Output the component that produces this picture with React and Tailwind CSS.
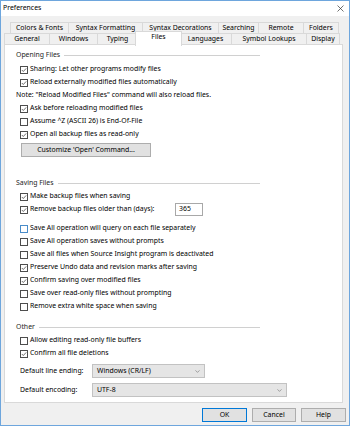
import { ChevronDown } from "lucide-react";

const rowTabs = [
  ["Colors & Fonts", "w-[59px]"],
  ["Syntax Formatting", "w-[75px] -ml-px"],
  ["Syntax Decorations", "w-[77px] -ml-px"],
  ["Searching", "w-[41px] -ml-px"],
  ["Remote", "w-[46px] -ml-px"],
  ["Folders", "w-[36px] -ml-px"],
];

const bottomTabs = [
  ["General", "w-[46px]"],
  ["Windows", "w-[49px] -ml-px"],
  ["Typing", "w-[41px] -ml-px"],
  ["Files", "w-[47px] -ml-[3px]", true],
  ["Languages", "w-[53px] -ml-[3px]"],
  ["Symbol Lookups", "w-[76px] -ml-px"],
  ["Display", "w-[34px] -ml-px"],
];

function Tab({ label, cls, active }) {
  if (active) {
    return (
      <div
        className={`${cls} relative z-10 -mt-[2px] h-[15px] flex items-start pt-[2px] justify-center bg-white border border-b-0 border-[#d9d9d9]`}
      >
        {label}
      </div>
    );
  }
  return (
    <div
      className={`${cls} h-[12px] flex items-center justify-center bg-[#f0f0f0] border border-[#d9d9d9]`}
    >
      {label}
    </div>
  );
}

function Box({ checked, focus }) {
  return (
    <span
      className={`w-[8px] h-[8px] shrink-0 flex items-center justify-center bg-white border ${
        focus ? "border-[#4a8cc9]" : "border-[#4d4d4d]"
      }`}
    >
      {checked && (
        <svg width="6" height="6" viewBox="0 0 6 6" className="block">
          <path d="M0.8 3 L2.3 4.5 L5.2 1.4" fill="none" stroke="#333" strokeWidth="0.7" />
        </svg>
      )}
    </span>
  );
}

function Check({ checked, label, focus, children }) {
  return (
    <div className="h-[13px] flex items-center pl-[4px] gap-[2px]">
      <Box checked={checked} focus={focus} />
      {children ? children : <span>{label}</span>}
    </div>
  );
}

function Group({ title, className = "" }) {
  return (
    <div className={`h-[13px] w-[244px] flex items-center gap-[4px] ${className}`}>
      <span className="text-[#1e1e1e]">{title}</span>
      <div className="flex-1 border-t border-[#d0d0d0]" />
    </div>
  );
}

function Select({ value, width }) {
  return (
    <div
      className={`${width} h-[14px] flex items-center justify-between pl-[4px] pr-[3px] bg-[#e5e5e5] border border-[#c2c2c2]`}
    >
      <span>{value}</span>
      <ChevronDown size={7} strokeWidth={1.5} color="#444" />
    </div>
  );
}

export default function App() {
  return (
    <div className="w-[350px] h-[426px] flex flex-col bg-[#f0f0f0] border border-[#6ea6dd] font-['Noto_Sans',sans-serif] text-[6.9px] text-black leading-none">
      <div className="h-[15px] shrink-0 flex items-center justify-between pl-[2px] pr-[5px] bg-white">
        <span>Preferences</span>
        <svg width="7" height="7" viewBox="0 0 7 7">
          <path d="M0.5 0.5 L6.5 6.5 M6.5 0.5 L0.5 6.5" stroke="#333" strokeWidth="0.7" />
        </svg>
      </div>

      <div className="mt-[6px] ml-[9px] flex">
        {rowTabs.map(([label, cls]) => (
          <Tab key={label} label={label} cls={cls} />
        ))}
      </div>
      <div className="-mt-px ml-[3px] flex items-start h-[12px]">
        {bottomTabs.map(([label, cls, active]) => (
          <Tab key={label} label={label} cls={cls} active={active} />
        ))}
      </div>

      <div className="-mt-px ml-[3px] w-[339px] h-[359px] shrink-0 bg-white border border-[#d9d9d9] pl-[11px] pt-[4px]">
        <Group title="Opening Files" />
        <div className="mt-[1px]">
          <Check checked label="Sharing: Let other programs modify files" />
          <Check checked label="Reload externally modified files automatically" />
          <div className="h-[13px] flex items-center">
            Note: "Reload Modified Files" command will also reload files.
          </div>
          <Check checked label="Ask before reloading modified files" />
          <Check label="Assume ^Z (ASCII 26) is End-Of-File" />
          <Check checked label="Open all backup files as read-only" />
        </div>
        <div className="ml-[5px] mt-[2px] w-[130px] h-[14px] flex items-center justify-center bg-[#e1e1e1] border border-[#adadad]">
          Customize 'Open' Command...
        </div>

        <Group title="Saving Files" className="mt-[20px]" />
        <Check checked label="Make backup files when saving" />
        <Check checked>
          <span className="w-[143px]">Remove backup files older than (days):</span>
          <div className="w-[28px] h-[13px] flex items-center pl-[3px] bg-white border border-[#a8a8a8]">
            365
          </div>
        </Check>
        <div className="mt-[6px]">
          <Check focus label="Save All operation will query on each file separately" />
          <Check label="Save All operation saves without prompts" />
          <Check label="Save all files when Source Insight program is deactivated" />
          <Check checked label="Preserve Undo data and revision marks after saving" />
          <Check checked label="Confirm saving over modified files" />
          <Check label="Save over read-only files without prompting" />
          <Check label="Remove extra white space when saving" />
        </div>

        <Group title="Other" className="mt-[8px]" />
        <Check label="Allow editing read-only file buffers" />
        <Check checked label="Confirm all file deletions" />
        <div className="mt-[4px] pl-[4px] flex items-center">
          <span className="w-[72px]">Default line ending:</span>
          <Select value="Windows (CR/LF)" width="w-[113px]" />
        </div>
        <div className="mt-[5px] pl-[4px] flex items-center">
          <span className="w-[72px]">Default encoding:</span>
          <Select value="UTF-8" width="w-[195px]" />
        </div>
      </div>

      <div className="mt-[5px] pr-[3px] flex justify-end gap-[5px]">
        <div className="w-[45px] h-[14px] flex items-center justify-center bg-[#e1e1e1] border border-[#0078d7]">
          OK
        </div>
        <div className="w-[44px] h-[14px] flex items-center justify-center bg-[#e1e1e1] border border-[#adadad]">
          Cancel
        </div>
        <div className="w-[45px] h-[14px] flex items-center justify-center bg-[#e1e1e1] border border-[#adadad]">
          Help
        </div>
      </div>
    </div>
  );
}
